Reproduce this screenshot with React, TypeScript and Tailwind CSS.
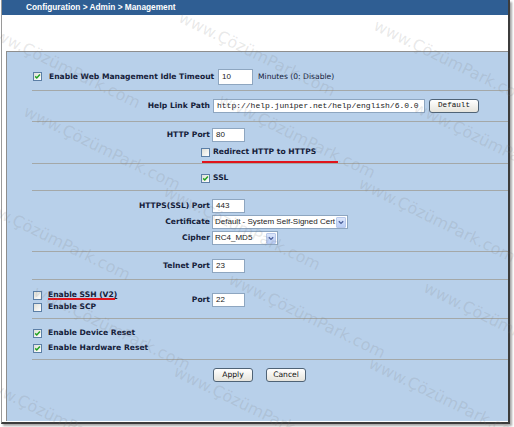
import React from "react";

const sans = "[font-family:'DejaVu_Sans',Verdana,sans-serif]";
const arial = "[font-family:'Liberation_Sans',Arial,sans-serif]";
const mono = "[font-family:'Liberation_Mono','Courier_New',monospace]";

function Check({ on = false }: { on?: boolean }) {
  return (
    <span className="relative inline-block w-[9px] h-[9px] shrink-0 border border-[#5c7fa6] bg-gradient-to-br from-[#dedfd8] to-white">
      {on && (
        <svg className="absolute left-0 top-0" width="7" height="7" viewBox="0 0 7 7">
          <path d="M1.2 3.4 L2.8 5 L5.9 1.6" fill="none" stroke="#21a121" strokeWidth="1.5" />
        </svg>
      )}
    </span>
  );
}

function Field({ w, h = 14, value, font = arial }: { w: number; h?: number; value: string; font?: string }) {
  return (
    <div
      className={`flex items-center shrink-0 bg-white border border-[#8ea6c0] pl-[3px] text-[8px] text-[#222] ${font}`}
      style={{ width: w, height: h }}
    >
      {value}
    </div>
  );
}

function Select({ w, value }: { w: number; value: string }) {
  return (
    <div
      className={`flex items-center shrink-0 h-[14px] bg-white border border-[#8ea6c0] pl-[2px] text-[8px] text-[#222] ${arial}`}
      style={{ width: w }}
    >
      <span className="flex-1 whitespace-nowrap overflow-hidden">{value}</span>
      <span className="flex items-center justify-center w-[10px] h-[11px] mr-px bg-gradient-to-b from-[#dce6fb] to-[#b9cdf6] border border-[#b8c8ea] rounded-[1px]">
        <svg width="6" height="5" viewBox="0 0 6 5">
          <path d="M0.8 1.2 L3 3.4 L5.2 1.2" fill="none" stroke="#4a5f9a" strokeWidth="1.3" />
        </svg>
      </span>
    </div>
  );
}

function Btn({ w, label, font = sans }: { w: number; label: string; font?: string }) {
  return (
    <div
      className={`flex items-center justify-center shrink-0 h-[14px] rounded-[3px] border border-[#4f6376] bg-gradient-to-b from-white to-[#e6e4dc] text-[7.6px] text-[#111] ${font}`}
      style={{ width: w }}
    >
      {label}
    </div>
  );
}

function Label({ children }: { children: React.ReactNode }) {
  return (
    <div className={`w-[203px] shrink-0 text-right font-bold text-[7.6px] text-[#15213a] ${sans}`}>{children}</div>
  );
}

function Sep() {
  return <div className="h-px ml-[25px] bg-[#a4a8a8] shrink-0" />;
}

const marks: [number, number][] = [
  [-10, 18], [185, 6], [380, 14],
  [30, 100], [225, 88], [420, 96],
  [-20, 190], [170, 180], [365, 172],
  [40, 280], [235, 268], [430, 276],
  [-15, 370], [180, 360], [375, 352],
];

export default function App() {
  return (
    <div className="relative w-[514px] h-[427px] bg-white overflow-hidden">
      <div className="ml-px w-[509px] h-[424px] border-l border-[#9a9a9a] border-r-2 border-b-2 border-r-[#3c3c3c] border-b-[#3c3c3c] shadow-[2px_2px_2px_rgba(0,0,0,0.35)] pb-px">
        <div className={`h-[15px] flex items-center pl-[24px] bg-[#2f5e93] text-white font-bold text-[8.3px] ${arial}`}>
          Configuration &gt; Admin &gt; Management
        </div>

        <div className="mt-[36px] ml-[4px] h-[370px] flex flex-col bg-[#b8d0ea] border-t border-l border-[#8e8e8e]">
          {/* idle timeout */}
          <div className="h-[38px] pt-[17px] shrink-0">
            <div className="flex items-center h-[16px]">
              <div className="w-[211px] shrink-0 flex items-center pl-[26px]">
                <Check on />
                <span className={`ml-[7px] font-bold text-[7.6px] text-[#15213a] whitespace-nowrap ${sans}`}>
                  Enable Web Management Idle Timeout
                </span>
              </div>
              <Field w={35} h={16} value="10" />
              <span className={`ml-[5px] text-[7.6px] text-[#15213a] ${sans}`}>Minutes (0: Disable)</span>
            </div>
          </div>
          <Sep />

          {/* help link */}
          <div className="h-[30px] pt-[8px] shrink-0">
            <div className="flex items-center h-[14px]">
              <Label>Help Link Path</Label>
              <div className="ml-[3px]">
                <Field w={212} value="http://help.juniper.net/help/english/6.0.0" font={mono} />
              </div>
              <div className="ml-[4px]">
                <Btn w={50} label="Default" font={mono} />
              </div>
            </div>
          </div>
          <Sep />

          {/* http */}
          <div className="h-[41px] pt-[6px] shrink-0">
            <div className="flex items-center h-[14px]">
              <Label>HTTP Port</Label>
              <div className="ml-[2px]">
                <Field w={33} value="80" />
              </div>
            </div>
            <div className="flex items-center h-[12px] mt-[4px] pl-[194px]">
              <Check />
              <span className={`ml-[3px] font-bold text-[7.6px] text-[#15213a] ${sans}`}>Redirect HTTP to HTTPS</span>
            </div>
            <div className="ml-[195px] mt-[3px] w-[136px] h-[2px] bg-[#e0141c]" />
          </div>
          <Sep />

          {/* ssl */}
          <div className="h-[26px] pt-[8px] shrink-0">
            <div className="flex items-center h-[12px] pl-[194px]">
              <Check on />
              <span className={`ml-[3px] font-bold text-[7.6px] text-[#15213a] ${sans}`}>SSL</span>
            </div>
          </div>
          <Sep />

          {/* https */}
          <div className="h-[60px] pt-[8px] shrink-0 flex flex-col gap-[2px]">
            <div className="flex items-center h-[14px]">
              <Label>HTTPS(SSL) Port</Label>
              <div className="ml-[2px]">
                <Field w={33} value="443" />
              </div>
            </div>
            <div className="flex items-center h-[14px]">
              <Label>Certificate</Label>
              <div className="ml-[2px]">
                <Select w={136} value="Default - System Self-Signed Cert" />
              </div>
            </div>
            <div className="flex items-center h-[14px]">
              <Label>Cipher</Label>
              <div className="ml-[2px]">
                <Select w={66} value="RC4_MD5" />
              </div>
            </div>
          </div>
          <Sep />

          {/* telnet */}
          <div className="h-[27px] pt-[7px] shrink-0">
            <div className="flex items-center h-[14px]">
              <Label>Telnet Port</Label>
              <div className="ml-[2px]">
                <Field w={33} value="23" />
              </div>
            </div>
          </div>
          <Sep />

          {/* ssh */}
          <div className="h-[38px] pt-[9px] shrink-0 flex items-start">
            <div className="w-[203px] shrink-0 flex items-start">
              <div className="pl-[26px] flex flex-col">
                <div className="flex items-center h-[12px]">
                  <Check />
                  <span className={`relative ml-[6px] font-bold text-[7.6px] text-[#15213a] underline ${sans}`}>
                    Enable SSH (V2)
                    <span className="absolute left-0 top-[9px] w-[67px] h-[2px] bg-[#e0141c]" />
                  </span>
                </div>
                <div className="flex items-center h-[12px]">
                  <Check />
                  <span className={`ml-[6px] font-bold text-[7.6px] text-[#15213a] ${sans}`}>Enable SCP</span>
                </div>
              </div>
              <div className={`ml-auto mt-[4px] h-[14px] flex items-center font-bold text-[7.6px] text-[#15213a] ${sans}`}>
                Port
              </div>
            </div>
            <div className="ml-[2px] mt-[4px]">
              <Field w={33} value="22" />
            </div>
          </div>
          <Sep />

          {/* resets */}
          <div className="h-[40px] pt-[8px] shrink-0 flex flex-col gap-[3px]">
            <div className="flex items-center h-[12px] pl-[26px]">
              <Check on />
              <span className={`ml-[6px] font-bold text-[7.6px] text-[#15213a] ${sans}`}>Enable Device Reset</span>
            </div>
            <div className="flex items-center h-[12px] pl-[26px]">
              <Check on />
              <span className={`ml-[6px] font-bold text-[7.6px] text-[#15213a] ${sans}`}>Enable Hardware Reset</span>
            </div>
          </div>
          <Sep />

          {/* actions */}
          <div className="flex-1 pt-[8px] flex items-start pl-[206px] gap-[13px]">
            <Btn w={40} label="Apply" />
            <Btn w={40} label="Cancel" />
          </div>
        </div>
      </div>

      {/* watermark layer */}
      <div className="pointer-events-none absolute inset-0">
        {marks.map(([x, y], i) => (
          <span
            key={i}
            className={`absolute origin-top-left rotate-[26deg] whitespace-nowrap text-[16px] text-[rgba(120,120,120,0.17)] ${sans}`}
            style={{ left: x, top: y }}
          >
            www.ÇözümPark.com
          </span>
        ))}
      </div>
    </div>
  );
}
